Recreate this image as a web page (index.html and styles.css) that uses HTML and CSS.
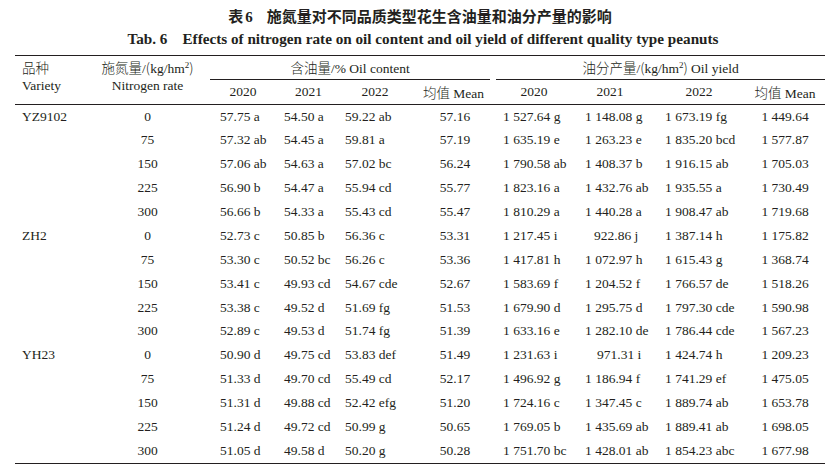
FILE: index.html
```html
<!DOCTYPE html>
<html lang="zh">
<head>
<meta charset="utf-8">
<title>表6 施氮量对不同品质类型花生含油量和油分产量的影响</title>
<link rel="stylesheet" href="styles.css">
</head>
<body>
<div class="page">
  <h1 class="title-cn"><span class="tno">表<span class="num">6</span></span>施氮量对不同品质类型花生含油量和油分产量的影响</h1>
  <h2 class="title-en"><span class="tno">Tab. 6</span>Effects of nitrogen rate on oil content and oil yield of different quality type peanuts</h2>
  <table class="data">
    <colgroup>
      <col class="c1"><col class="c2"><col class="c3"><col class="c4"><col class="c5">
      <col class="c6"><col class="c7"><col class="c8"><col class="c9"><col class="c10">
    </colgroup>
    <thead>
      <tr class="h1">
        <th rowspan="2" class="hv"><span class="cjk">品种</span><br>Variety</th>
        <th rowspan="2" class="hn"><span class="cjk">施氮量</span>/<span class="cjk">(</span>kg/hm<sup>2</sup><span class="cjk">)</span><br>Nitrogen rate</th>
        <th colspan="4" class="grp"><div class="rule rule-oil"><span class="cjk">含油量</span>/% Oil content</div></th>
        <th colspan="4" class="grp"><div class="rule rule-yield"><span class="cjk">油分产量</span>/<span class="cjk">(</span>kg/hm<sup>2</sup><span class="cjk">)</span> Oil yield</div></th>
      </tr>
      <tr class="h2">
        <th>2020</th><th>2021</th><th>2022</th><th class="m1"><span class="cjk">均值</span> Mean</th>
        <th>2020</th><th>2021</th><th>2022</th><th class="m2"><span class="cjk">均值</span> Mean</th>
      </tr>
    </thead>
    <tbody>
      <tr><td class="v">YZ9102</td><td class="n">0</td><td class="a">57.75 a</td><td class="b">54.50 a</td><td class="c">59.22 ab</td><td class="m1">57.16</td><td class="d">1 527.64 g</td><td class="e">1 148.08 g</td><td class="f">1 673.19 fg</td><td class="m2">1 449.64</td></tr>
      <tr><td class="v"></td><td class="n">75</td><td class="a">57.32 ab</td><td class="b">54.45 a</td><td class="c">59.81 a</td><td class="m1">57.19</td><td class="d">1 635.19 e</td><td class="e">1 263.23 e</td><td class="f">1 835.20 bcd</td><td class="m2">1 577.87</td></tr>
      <tr><td class="v"></td><td class="n">150</td><td class="a">57.06 ab</td><td class="b">54.63 a</td><td class="c">57.02 bc</td><td class="m1">56.24</td><td class="d">1 790.58 ab</td><td class="e">1 408.37 b</td><td class="f">1 916.15 ab</td><td class="m2">1 705.03</td></tr>
      <tr><td class="v"></td><td class="n">225</td><td class="a">56.90 b</td><td class="b">54.47 a</td><td class="c">55.94 cd</td><td class="m1">55.77</td><td class="d">1 823.16 a</td><td class="e">1 432.76 ab</td><td class="f">1 935.55 a</td><td class="m2">1 730.49</td></tr>
      <tr><td class="v"></td><td class="n">300</td><td class="a">56.66 b</td><td class="b">54.33 a</td><td class="c">55.43 cd</td><td class="m1">55.47</td><td class="d">1 810.29 a</td><td class="e">1 440.28 a</td><td class="f">1 908.47 ab</td><td class="m2">1 719.68</td></tr>
      <tr><td class="v">ZH2</td><td class="n">0</td><td class="a">52.73 c</td><td class="b">50.85 b</td><td class="c">56.36 c</td><td class="m1">53.31</td><td class="d">1 217.45 i</td><td class="e ind">922.86 j</td><td class="f">1 387.14 h</td><td class="m2">1 175.82</td></tr>
      <tr><td class="v"></td><td class="n">75</td><td class="a">53.30 c</td><td class="b">50.52 bc</td><td class="c">56.26 c</td><td class="m1">53.36</td><td class="d">1 417.81 h</td><td class="e">1 072.97 h</td><td class="f">1 615.43 g</td><td class="m2">1 368.74</td></tr>
      <tr><td class="v"></td><td class="n">150</td><td class="a">53.41 c</td><td class="b">49.93 cd</td><td class="c">54.67 cde</td><td class="m1">52.67</td><td class="d">1 583.69 f</td><td class="e">1 204.52 f</td><td class="f">1 766.57 de</td><td class="m2">1 518.26</td></tr>
      <tr><td class="v"></td><td class="n">225</td><td class="a">53.38 c</td><td class="b">49.52 d</td><td class="c">51.69 fg</td><td class="m1">51.53</td><td class="d">1 679.90 d</td><td class="e">1 295.75 d</td><td class="f">1 797.30 cde</td><td class="m2">1 590.98</td></tr>
      <tr><td class="v"></td><td class="n">300</td><td class="a">52.89 c</td><td class="b">49.53 d</td><td class="c">51.74 fg</td><td class="m1">51.39</td><td class="d">1 633.16 e</td><td class="e">1 282.10 de</td><td class="f">1 786.44 cde</td><td class="m2">1 567.23</td></tr>
      <tr><td class="v">YH23</td><td class="n">0</td><td class="a">50.90 d</td><td class="b">49.75 cd</td><td class="c">53.83 def</td><td class="m1">51.49</td><td class="d">1 231.63 i</td><td class="e ind2">971.31 i</td><td class="f">1 424.74 h</td><td class="m2">1 209.23</td></tr>
      <tr><td class="v"></td><td class="n">75</td><td class="a">51.33 d</td><td class="b">49.70 cd</td><td class="c">55.49 cd</td><td class="m1">52.17</td><td class="d">1 496.92 g</td><td class="e">1 186.94 f</td><td class="f">1 741.29 ef</td><td class="m2">1 475.05</td></tr>
      <tr><td class="v"></td><td class="n">150</td><td class="a">51.31 d</td><td class="b">49.88 cd</td><td class="c">52.42 efg</td><td class="m1">51.20</td><td class="d">1 724.16 c</td><td class="e">1 347.45 c</td><td class="f">1 889.74 ab</td><td class="m2">1 653.78</td></tr>
      <tr><td class="v"></td><td class="n">225</td><td class="a">51.24 d</td><td class="b">49.72 cd</td><td class="c">50.99 g</td><td class="m1">50.65</td><td class="d">1 769.05 b</td><td class="e">1 435.69 ab</td><td class="f">1 889.41 ab</td><td class="m2">1 698.05</td></tr>
      <tr><td class="v"></td><td class="n">300</td><td class="a">51.05 d</td><td class="b">49.58 d</td><td class="c">50.20 g</td><td class="m1">50.28</td><td class="d">1 751.70 bc</td><td class="e">1 428.01 ab</td><td class="f">1 854.23 abc</td><td class="m2">1 677.98</td></tr>
    </tbody>
  </table>
</div>
</body>
</html>
```

FILE: styles.css
```css
* { box-sizing: border-box; }
html, body { margin: 0; padding: 0; background: #fff; }
body {
  font-family: "Liberation Serif", "Noto Sans CJK SC", serif;
  color: #231f20;
}
.page {
  width: 837px;
  padding: 0 12px 0 15px;
}
.cjk { font-family: "Noto Sans CJK SC", sans-serif; font-weight: 300; }

.title-cn {
  margin: 0;
  padding-top: 6px;
  height: 27px;
  line-height: 20px;
  font-family: "Noto Sans CJK SC", sans-serif;
  font-weight: 700;
  font-size: 15px;
  text-align: center;
}
.title-cn .tno { margin-right: 14px; }
.title-cn .num { font-family: "Liberation Serif", serif; font-weight: 700; font-size: 15px; margin-left: 2px; }

.title-en {
  margin: 0;
  height: 28px;
  line-height: 24px;
  font-family: "Liberation Serif", serif;
  font-weight: 700;
  font-size: 15.2px;
  text-align: center;
  padding-left: 6px;
}
.title-en .tno { margin-right: 15px; }

table.data {
  width: 810px;
  border-collapse: collapse;
  table-layout: fixed;
  font-size: 13.5px;
  border-top: 1.2px solid #231f20;
  border-bottom: 1.2px solid #231f20;
}
.c1 { width: 75px; } .c2 { width: 115px; } .c3 { width: 76px; } .c4 { width: 55px; }
.c5 { width: 78px; } .c6 { width: 79px; } .c7 { width: 82px; } .c8 { width: 70px; }
.c9 { width: 108px; } .c10 { width: 72px; }

th { font-weight: 400; padding: 0; white-space: nowrap; }
thead { border-bottom: 1.2px solid #231f20; }
.h1 th { height: 24px; }
.h2 th { height: 24px; text-align: center; }
th.hv { text-align: left; padding: 3px 0 0 7px; vertical-align: top; line-height: 17px; }
th.hn { text-align: center; padding: 3px 0 0 0; vertical-align: top; line-height: 17px; }
sup { font-size: 9px; line-height: 0; vertical-align: 5px; }
th.grp { vertical-align: top; }
.rule {
  height: 24px;
  line-height: 23px;
  border-bottom: 1px solid #231f20;
  text-align: center;
}
.rule-oil { margin: 0 3px 0 5px; }
.rule-yield { margin: 0 0 0 3px; }
.h2 th.m2, td.m2 { padding-right: 8px; }

td { padding: 0; height: 23.87px; line-height: 23.87px; white-space: nowrap; }
td.v { padding-left: 7px; }
td.n { text-align: center; }
td.a { padding-left: 15px; }
td.b { padding-left: 3px; }
td.c { padding-left: 9px; }
td.m1 { text-align: center; padding-left: 3px; }
td.d { padding-left: 10px; }
td.e { padding-left: 10px; }
td.e.ind { padding-left: 19px; }
td.e.ind2 { padding-left: 22px; }
td.f { padding-left: 20px; }
td.m2 { text-align: center; }
```
